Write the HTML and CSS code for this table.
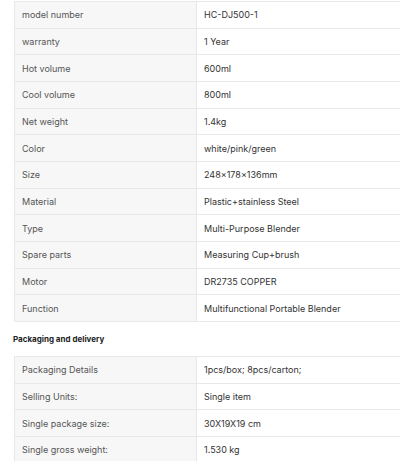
FILE: index.html
```html
<!DOCTYPE html>
<html lang="en">

<head>
  <meta charset="UTF-8">
  <meta name="viewport" content="width=device-width, initial-scale=1.0">
  <title>Product attributes</title>
  <link rel="stylesheet" href="styles.css">
</head>

<body>
  <section class="attributes">
    <table class="attr-table">
      <tr><td class="name">model number</td><td class="value">HC-DJ500-1</td></tr>
      <tr><td class="name">warranty</td><td class="value">1 Year</td></tr>
      <tr><td class="name">Hot volume</td><td class="value">600ml</td></tr>
      <tr><td class="name">Cool volume</td><td class="value">800ml</td></tr>
      <tr><td class="name">Net weight</td><td class="value">1.4kg</td></tr>
      <tr><td class="name">Color</td><td class="value">white/pink/green</td></tr>
      <tr><td class="name">Size</td><td class="value">248×178×136mm</td></tr>
      <tr><td class="name">Material</td><td class="value">Plastic+stainless Steel</td></tr>
      <tr><td class="name">Type</td><td class="value">Multi-Purpose Blender</td></tr>
      <tr><td class="name">Spare parts</td><td class="value">Measuring Cup+brush</td></tr>
      <tr><td class="name">Motor</td><td class="value">DR2735 COPPER</td></tr>
      <tr><td class="name">Function</td><td class="value">Multifunctional Portable Blender</td></tr>
    </table>

    <h3>Packaging and delivery</h3>

    <table class="attr-table">
      <tr><td class="name">Packaging Details</td><td class="value">1pcs/box; 8pcs/carton;</td></tr>
      <tr><td class="name">Selling Units:</td><td class="value">Single item</td></tr>
      <tr><td class="name">Single package size:</td><td class="value">30X19X19 cm</td></tr>
      <tr><td class="name">Single gross weight:</td><td class="value">1.530 kg</td></tr>
    </table>
  </section>
</body>

</html>
```

FILE: styles.css
```css
body {
  margin: 0;
  font-family: Inter, "Noto Sans", sans-serif;
  color: #222;
  background: #fff;
  overflow: hidden;
}

.attributes {
  padding: 1px 0 0 14px;
}

.attr-table {
  width: 100%;
  border-collapse: collapse;
  table-layout: fixed;
  font-size: 9px;
}

.attr-table td {
  height: 25.67px;
  padding: 0 7px;
  border: 1px solid #e8e8e8;
  vertical-align: middle;
  white-space: nowrap;
}

.attr-table .name {
  width: 167px;
  background: #f7f7f7;
  color: #555;
}

.attr-table .value {
  color: #333;
  border-right: none;
}

h3 {
  font-size: 8px;
  font-weight: 700;
  color: #222;
  margin: 0 0 0 -1px;
  padding: 12px 0;
}
```
